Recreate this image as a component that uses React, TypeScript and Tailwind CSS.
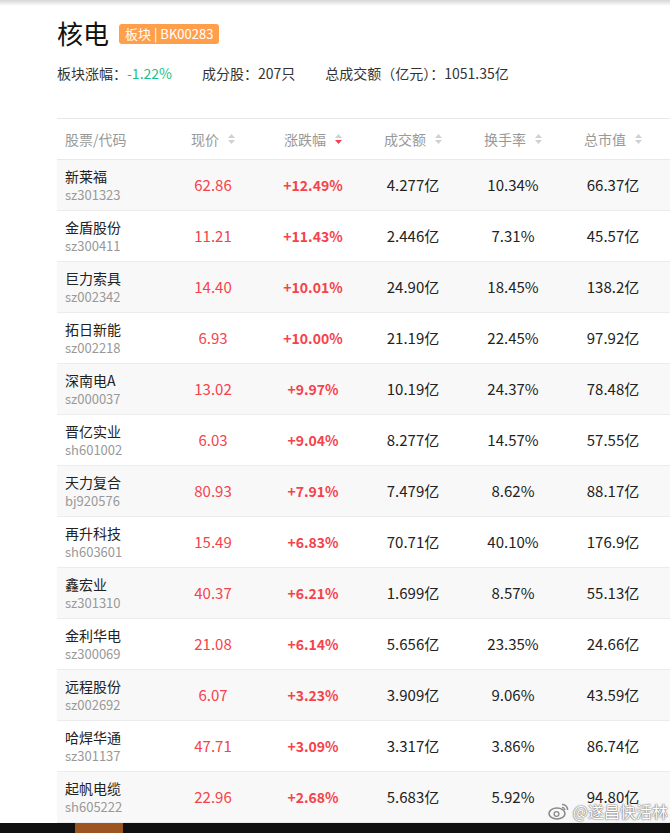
import React from "react";

type Stock = {
    name: string;
    code: string;
    price: string;
    change: string;
    amount: string;
    turnover: string;
    cap: string;
};

const stocks: Stock[] = [
    { name: "新莱福", code: "sz301323", price: "62.86", change: "+12.49%", amount: "4.277亿", turnover: "10.34%", cap: "66.37亿" },
    { name: "金盾股份", code: "sz300411", price: "11.21", change: "+11.43%", amount: "2.446亿", turnover: "7.31%", cap: "45.57亿" },
    { name: "巨力索具", code: "sz002342", price: "14.40", change: "+10.01%", amount: "24.90亿", turnover: "18.45%", cap: "138.2亿" },
    { name: "拓日新能", code: "sz002218", price: "6.93", change: "+10.00%", amount: "21.19亿", turnover: "22.45%", cap: "97.92亿" },
    { name: "深南电A", code: "sz000037", price: "13.02", change: "+9.97%", amount: "10.19亿", turnover: "24.37%", cap: "78.48亿" },
    { name: "晋亿实业", code: "sh601002", price: "6.03", change: "+9.04%", amount: "8.277亿", turnover: "14.57%", cap: "57.55亿" },
    { name: "天力复合", code: "bj920576", price: "80.93", change: "+7.91%", amount: "7.479亿", turnover: "8.62%", cap: "88.17亿" },
    { name: "再升科技", code: "sh603601", price: "15.49", change: "+6.83%", amount: "70.71亿", turnover: "40.10%", cap: "176.9亿" },
    { name: "鑫宏业", code: "sz301310", price: "40.37", change: "+6.21%", amount: "1.699亿", turnover: "8.57%", cap: "55.13亿" },
    { name: "金利华电", code: "sz300069", price: "21.08", change: "+6.14%", amount: "5.656亿", turnover: "23.35%", cap: "24.66亿" },
    { name: "远程股份", code: "sz002692", price: "6.07", change: "+3.23%", amount: "3.909亿", turnover: "9.06%", cap: "43.59亿" },
    { name: "哈焊华通", code: "sz301137", price: "47.71", change: "+3.09%", amount: "3.317亿", turnover: "3.86%", cap: "86.74亿" },
    { name: "起帆电缆", code: "sh605222", price: "22.96", change: "+2.68%", amount: "5.683亿", turnover: "5.92%", cap: "94.80亿" },
];

function SortIcon({ active }: { active?: boolean }) {
    return (
        <svg width="7" height="10" viewBox="0 0 7 10" className="ml-[9px]">
            <path d="M3.5 0 L7 4 L0 4 Z" fill="#d0d0d0" />
            <path d="M0 6 L7 6 L3.5 10 Z" fill={active ? "#f5424b" : "#d0d0d0"} />
        </svg>
    );
}

const cols = "grid grid-cols-[106px_100px_100px_100px_100px_100px_1fr]";

export default function App() {
    return (
        <div
            className="relative w-[670px] h-[833px] overflow-hidden bg-white"
            style={{ fontFamily: '"Noto Sans CJK SC", "Noto Sans", sans-serif' }}
        >
            {/* top shadow */}
            <div className="h-[6px] bg-gradient-to-b from-[#d6d6d6] to-white" />

            <div className="pl-[57px]">
                {/* HEADER */}
                <div className="flex items-center mt-[11px] h-[32px]">
                    <h1 className="text-[26px] leading-none text-[#111]">核电</h1>
                    <span className="ml-[10px] mt-[2px] rounded-[3px] bg-[#ff9f4c] px-[6px] h-[20px] leading-[20px] text-[13px] text-white">
                        板块 | BK00283
                    </span>
                </div>

                <div className="flex items-center mt-[15px] h-[18px] text-[14px] text-[#333]">
                    <span>板块涨幅：</span>
                    <span className="text-[#1fbf8a]">-1.22%</span>
                    <span className="ml-[30px]">成分股：207只</span>
                    <span className="ml-[30px]">总成交额（亿元）：1051.35亿</span>
                </div>

                {/* TABLE */}
                <div className="mt-[36px] border-t border-[#e8e8e8]">
                    <div className={`${cols} h-[41px] items-center text-[14px] text-[#999] border-b border-[#e8e8e8]`}>
                        <div className="pl-[8px]">股票/代码</div>
                        <div className="flex items-center justify-center">现价<SortIcon /></div>
                        <div className="flex items-center justify-center">涨跌幅<SortIcon active /></div>
                        <div className="flex items-center justify-center">成交额<SortIcon /></div>
                        <div className="flex items-center justify-center">换手率<SortIcon /></div>
                        <div className="flex items-center justify-center">总市值<SortIcon /></div>
                        <div />
                    </div>

                    {stocks.map((s, i) => (
                        <div
                            key={s.code}
                            className={`${cols} h-[51px] items-center border-b border-[#ececec] text-[14px] ${i % 2 === 0 ? "bg-[#f8f8f8]" : "bg-white"}`}
                        >
                            <div className="pl-[8px] flex flex-col">
                                <span className="text-[14px] leading-[19px] text-[#222]">{s.name}</span>
                                <span className="text-[13px] leading-[18px] text-[#999]">{s.code}</span>
                            </div>
                            <div className="text-center text-[15px] text-[#f5424b]">{s.price}</div>
                            <div className="text-center font-bold text-[14px] text-[#f5424b]">{s.change}</div>
                            <div className="text-center text-[15px] text-[#222]">{s.amount}</div>
                            <div className="text-center text-[15px] text-[#222]">{s.turnover}</div>
                            <div className="text-center text-[15px] text-[#222]">{s.cap}</div>
                            <div />
                        </div>
                    ))}
                </div>
            </div>

            {/* bottom bar */}
            <div className="absolute left-0 right-0 bottom-0 h-[10px] bg-[#111] flex">
                <div className="ml-[75px] w-[48px] bg-[#9c5420]" />
            </div>

            {/* watermark */}
            <div
                className="absolute right-[2px] bottom-[10px] flex items-center text-[16px] text-white"
                style={{ textShadow: "0 0 2px #666, 0 0 1px #555" }}
            >
                <svg width="22" height="18" viewBox="0 0 22 18" className="mr-[3px]">
                    <ellipse cx="9" cy="11.5" rx="8" ry="5.5" fill="none" stroke="#888" strokeWidth="1.6" />
                    <circle cx="8.5" cy="12" r="2.4" fill="none" stroke="#888" strokeWidth="1.3" />
                    <path d="M14 2.5 A5 5 0 0 1 19.5 8" fill="none" stroke="#888" strokeWidth="1.5" />
                    <path d="M14 5.5 A2.5 2.5 0 0 1 16.8 8" fill="none" stroke="#888" strokeWidth="1.3" />
                </svg>
                <span>@遂昌快活林</span>
            </div>
        </div>
    );
}
